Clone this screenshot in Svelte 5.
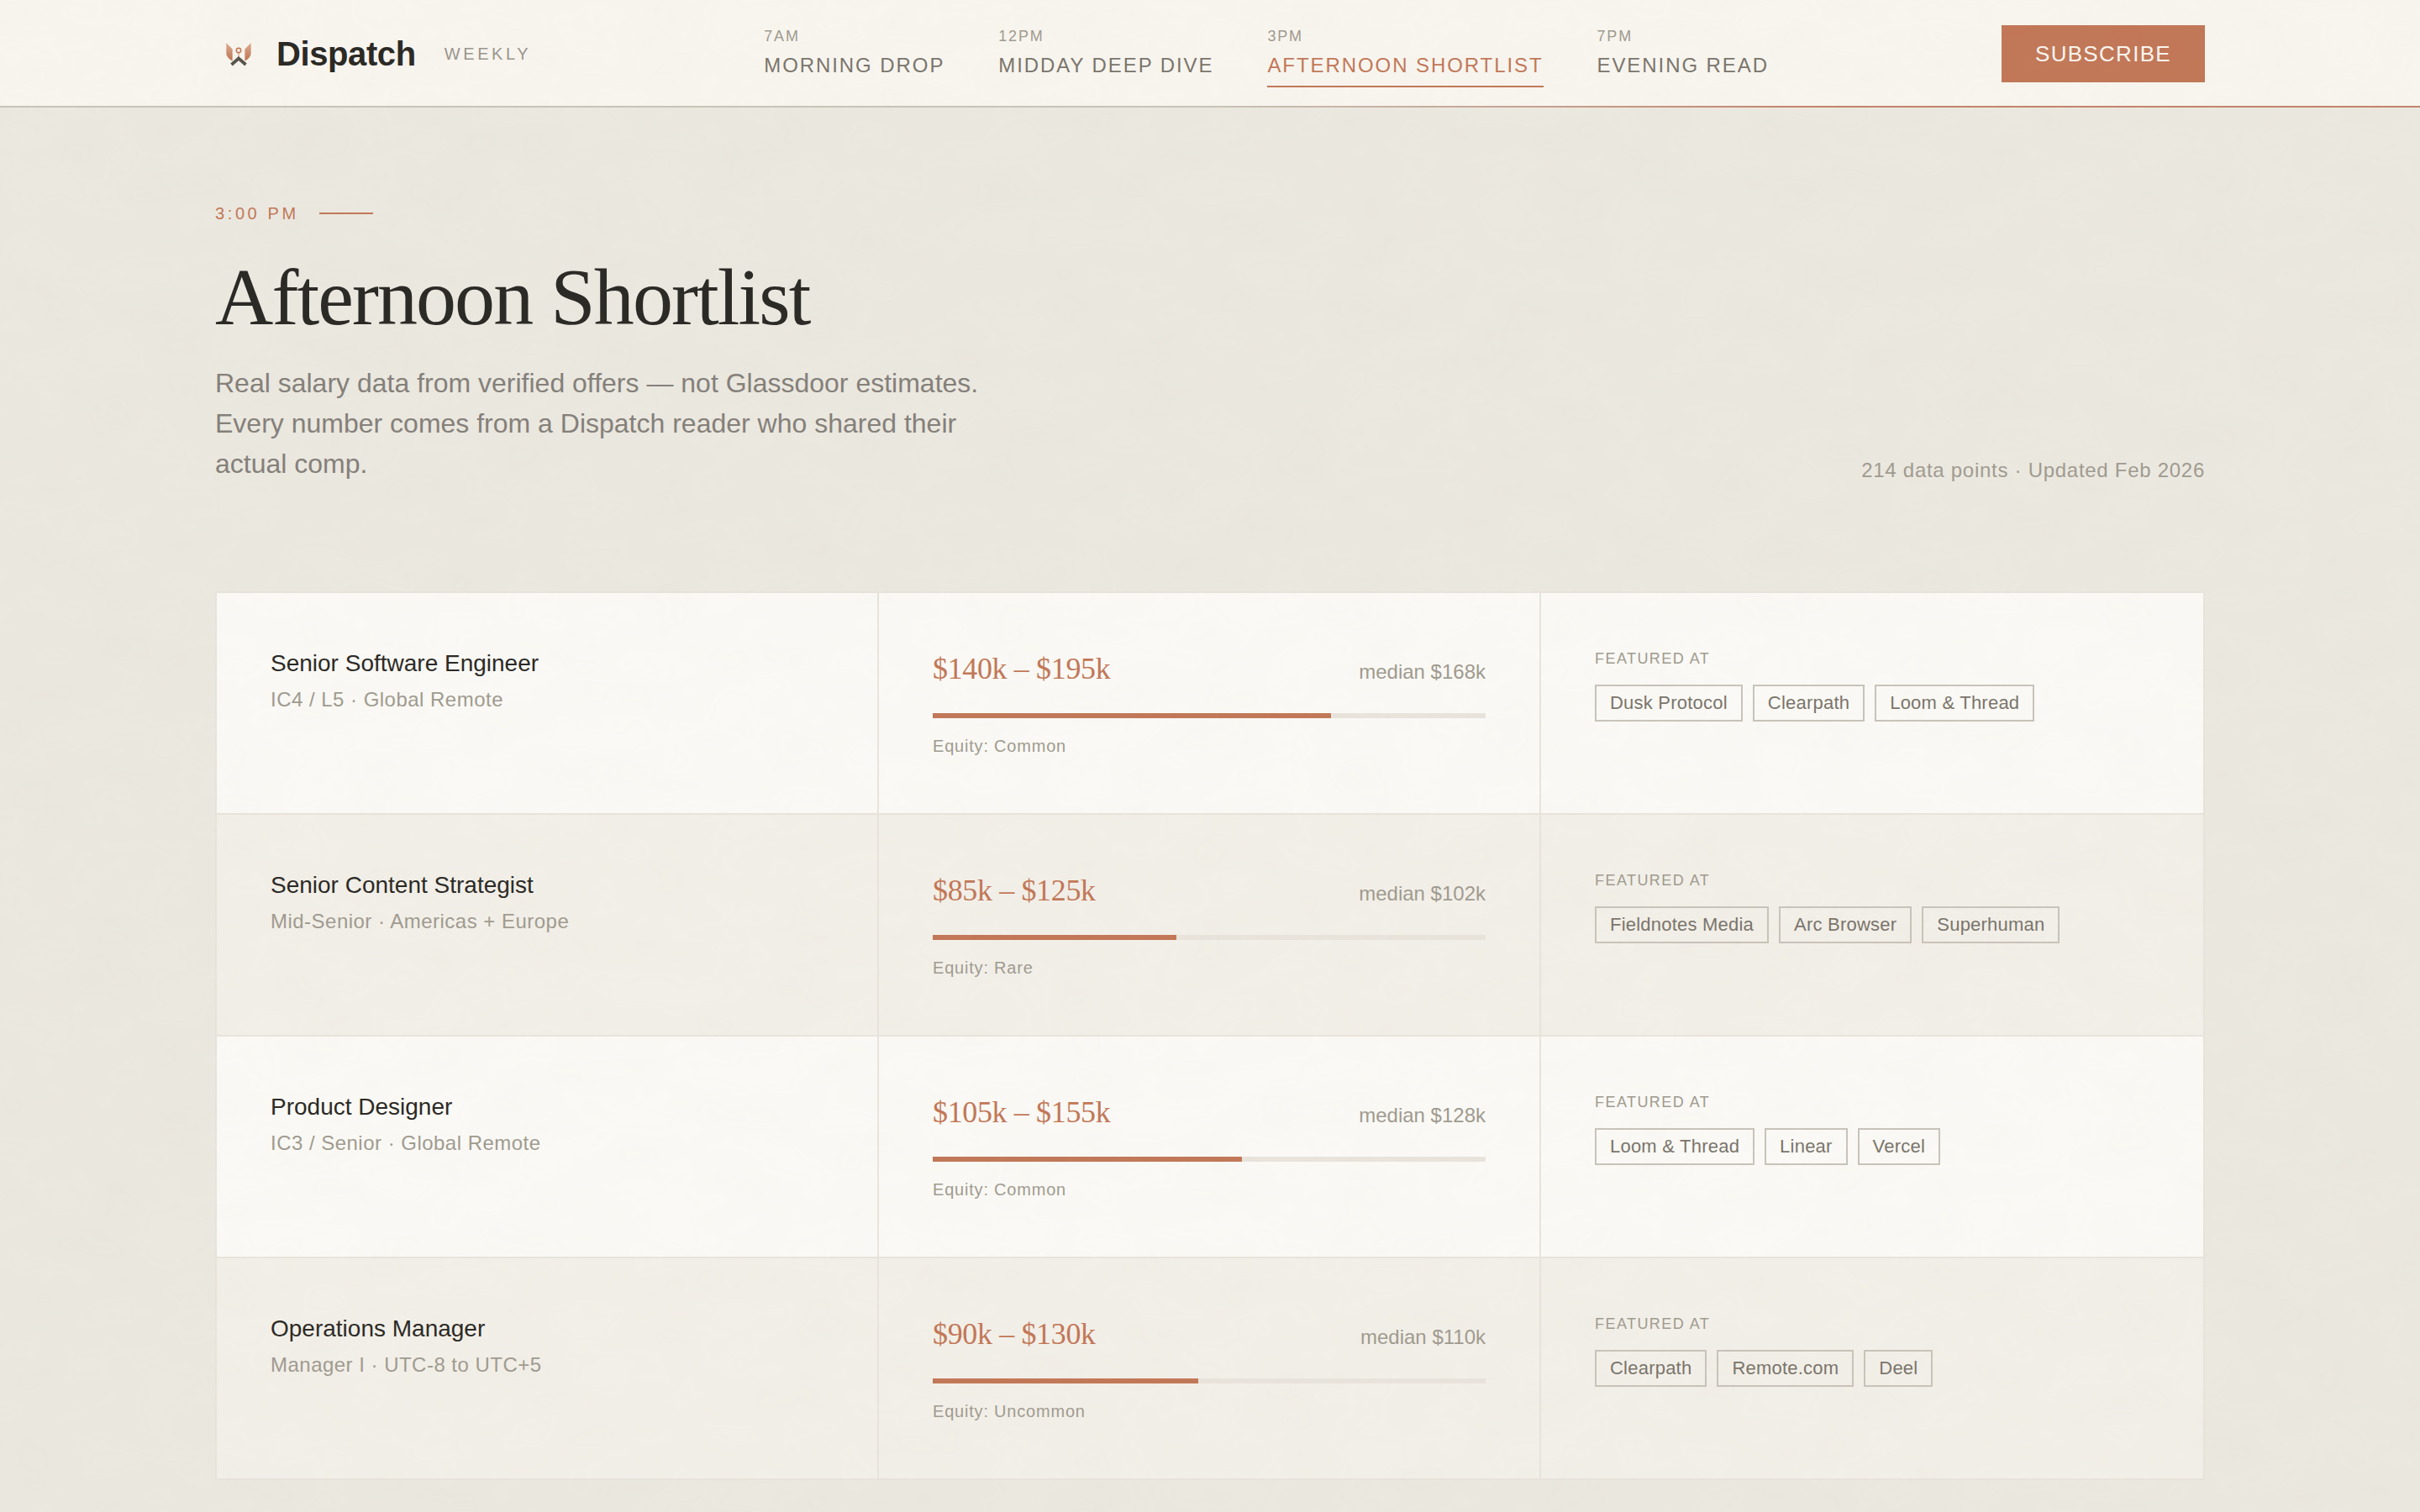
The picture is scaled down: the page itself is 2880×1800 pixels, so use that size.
<script>
  // Schedule shown in the top nav
  const slots = [
    { time: '7AM', name: 'Morning Drop' },
    { time: '12PM', name: 'Midday Deep Dive' },
    { time: '3PM', name: 'Afternoon Shortlist', active: true },
    { time: '7PM', name: 'Evening Read' }
  ];

  const roles = [
    {
      title: 'Senior Software Engineer',
      level: 'IC4 / L5 · Global Remote',
      range: '$140k – $195k',
      median: '$168k',
      fill: 72,
      equity: 'Common',
      companies: ['Dusk Protocol', 'Clearpath', 'Loom & Thread']
    },
    {
      title: 'Senior Content Strategist',
      level: 'Mid-Senior · Americas + Europe',
      range: '$85k – $125k',
      median: '$102k',
      fill: 44,
      equity: 'Rare',
      companies: ['Fieldnotes Media', 'Arc Browser', 'Superhuman']
    },
    {
      title: 'Product Designer',
      level: 'IC3 / Senior · Global Remote',
      range: '$105k – $155k',
      median: '$128k',
      fill: 56,
      equity: 'Common',
      companies: ['Loom & Thread', 'Linear', 'Vercel']
    },
    {
      title: 'Operations Manager',
      level: 'Manager I · UTC-8 to UTC+5',
      range: '$90k – $130k',
      median: '$110k',
      fill: 48,
      equity: 'Uncommon',
      companies: ['Clearpath', 'Remote.com', 'Deel']
    }
  ];
</script>

<header class="topbar">
  <div class="brand">
    <svg class="mark" viewBox="0 0 56 56" width="56" height="56" aria-hidden="true">
      <defs>
        <linearGradient id="wing" x1="0" y1="0" x2="0" y2="1">
          <stop offset="0" stop-color="#dfab8e" />
          <stop offset="1" stop-color="#bd7552" />
        </linearGradient>
      </defs>
      <path d="M13.3 15 L20.6 22.5 L20.6 36.5 Q13.3 33 13.3 27 Z" fill="url(#wing)" />
      <path d="M42.7 15 L35.4 22.5 L35.4 36.5 Q42.7 33 42.7 27 Z" fill="url(#wing)" />
      <path d="M28 27 L28 33" stroke="#e3bfa8" stroke-width="2" />
      <path d="M19.5 41 L28 33.5 L36.5 41" fill="none" stroke="#57534d" stroke-width="3.8" />
      <circle cx="28" cy="24" r="2.7" fill="#f8efe7" stroke="#c27858" stroke-width="1.5" />
    </svg>
    <span class="wordmark">Dispatch</span>
    <span class="edition">WEEKLY</span>
  </div>

  <nav class="slots">
    {#each slots as slot}
      <a class="slot" class:active={slot.active} href="#{slot.time}">
        <span class="slot-time">{slot.time}</span>
        <span class="slot-name">{slot.name}</span>
      </a>
    {/each}
  </nav>

  <button class="subscribe">SUBSCRIBE</button>
</header>

<main class="page">
  <section class="hero">
    <div class="hero-text">
      <div class="eyebrow">
        <span>3:00 PM</span>
        <i class="eyebrow-line"></i>
      </div>
      <h1>Afternoon Shortlist</h1>
      <p class="lede">
        Real salary data from verified offers — not Glassdoor estimates. Every number comes from a
        Dispatch reader who shared their actual comp.
      </p>
    </div>
    <p class="meta">214 data points · Updated Feb 2026</p>
  </section>

  <section class="table">
    {#each roles as role, i}
      <div class="cell" class:alt={i % 2 === 1}>
        <div class="role-title">{role.title}</div>
        <div class="role-level">{role.level}</div>
      </div>

      <div class="cell" class:alt={i % 2 === 1}>
        <div class="pay">
          <span class="range">{role.range}</span>
          <span class="median">median {role.median}</span>
        </div>
        <div class="track">
          <div class="fill" style="width: {role.fill}%"></div>
        </div>
        <div class="equity">Equity: {role.equity}</div>
      </div>

      <div class="cell" class:alt={i % 2 === 1}>
        <div class="featured">FEATURED AT</div>
        <div class="tags">
          {#each role.companies as company}
            <span class="tag">{company}</span>
          {/each}
        </div>
      </div>
    {/each}
  </section>
</main>

<!-- paper grain over the whole page -->
<svg class="grain" aria-hidden="true">
  <filter id="grain-noise">
    <feTurbulence type="fractalNoise" baseFrequency="0.012 0.02" numOctaves="3" seed="4" />
    <feColorMatrix values="0 0 0 0 0.45  0 0 0 0 0.42  0 0 0 0 0.36  0.9 0 0 0 -0.2" />
  </filter>
  <rect width="100%" height="100%" filter="url(#grain-noise)" />
</svg>

<style>
  :global(body) {
    margin: 0;
    background-color: #ebe8e0;
    font-family: "Liberation Sans", Arial, sans-serif;
  }

  .grain {
    position: fixed;
    inset: 0;
    width: 100%;
    height: 100%;
    opacity: 0.035;
    pointer-events: none;
  }

  .topbar {
    position: relative;
    box-sizing: border-box;
    height: 128px;
    padding: 0 256px;
    display: flex;
    align-items: center;
    justify-content: space-between;
    background-color: #f8f5ef;
  }

  .topbar::after {
    content: "";
    position: absolute;
    left: 0;
    right: 0;
    bottom: 0;
    height: 2px;
    background: linear-gradient(90deg, #c8c4ba 0, #c8c4ba 50%, #c4846a 75%, #c4846a 100%);
  }

  .brand {
    display: flex;
    align-items: center;
  }

  .mark {
    display: block;
    margin-right: 17px;
  }

  .wordmark {
    font-size: 40px;
    font-weight: 700;
    letter-spacing: -0.01em;
    color: #2c2a26;
    margin-right: 34px;
  }

  .edition {
    font-size: 20px;
    letter-spacing: 0.18em;
    color: #9a958c;
  }

  .slots {
    display: flex;
    gap: 64px;
  }

  .slot {
    display: flex;
    flex-direction: column;
    padding: 7px 0 9px;
    border-bottom: 2px solid transparent;
    text-decoration: none;
    color: #7a756c;
  }

  .slot.active {
    color: #c27858;
    border-bottom-color: #c27858;
  }

  .slot-time {
    font-size: 18px;
    line-height: 24px;
    letter-spacing: 0.1em;
    margin-bottom: 8px;
    color: #a09b90;
  }

  .slot-name {
    font-size: 24px;
    line-height: 30px;
    letter-spacing: 0.08em;
    text-transform: uppercase;
  }

  .subscribe {
    width: 242px;
    height: 68px;
    padding: 0;
    border: none;
    background-color: #c27858;
    color: #faf6f0;
    font-family: inherit;
    font-size: 26px;
    letter-spacing: 0.05em;
  }

  .page {
    padding: 112px 256px 36px;
  }

  .hero {
    display: flex;
    align-items: flex-end;
    justify-content: space-between;
    margin-bottom: 128px;
  }

  .eyebrow {
    display: flex;
    align-items: center;
    gap: 24px;
    font-size: 20px;
    line-height: 28px;
    letter-spacing: 0.18em;
    color: #c27858;
  }

  .eyebrow-line {
    display: block;
    width: 64px;
    height: 2px;
    background-color: #c27858;
  }

  h1 {
    margin: 33px 0 25px;
    font-family: "Liberation Serif", "Times New Roman", serif;
    font-size: 96px;
    line-height: 106px;
    font-weight: 400;
    letter-spacing: -0.02em;
    color: #2c2a26;
  }

  .lede {
    margin: 0;
    width: 960px;
    font-size: 32px;
    line-height: 48px;
    color: #85807a;
  }

  .meta {
    margin: 0;
    font-size: 24px;
    line-height: 32px;
    letter-spacing: 0.03em;
    color: #a09b90;
  }

  .table {
    display: grid;
    grid-template-columns: 786px 786px 1fr;
    gap: 2px;
    border: 2px solid #e8e4dc;
    background-color: #e8e4dc;
  }

  .cell {
    box-sizing: border-box;
    height: 262px;
    padding: 64px;
    background-color: #faf9f5;
  }

  .cell.alt {
    background-color: #f2efe8;
  }

  .role-title {
    font-size: 28px;
    line-height: 40px;
    color: #2c2a26;
  }

  .role-level {
    margin-top: 5px;
    font-size: 24px;
    line-height: 36px;
    letter-spacing: 0.02em;
    color: #a09b90;
  }

  .pay {
    display: flex;
    align-items: baseline;
    justify-content: space-between;
    margin-top: 2px;
  }

  .range {
    font-family: "Liberation Serif", "Times New Roman", serif;
    font-size: 36px;
    line-height: 48px;
    letter-spacing: -0.01em;
    color: #c27858;
  }

  .median {
    font-size: 24px;
    color: #a09b90;
  }

  .track {
    height: 6px;
    margin-top: 29px;
    background-color: #e8e4dc;
  }

  .fill {
    height: 100%;
    background-color: #c27858;
  }

  .equity {
    margin-top: 19px;
    font-size: 20px;
    line-height: 28px;
    letter-spacing: 0.04em;
    color: #a09b90;
  }

  .featured {
    font-size: 18px;
    line-height: 28px;
    letter-spacing: 0.08em;
    color: #a09b90;
  }

  .tags {
    display: flex;
    gap: 12px;
    margin-top: 17px;
  }

  .tag {
    box-sizing: border-box;
    height: 44px;
    padding: 0 16px;
    border: 2px solid #c8c4ba;
    font-size: 22px;
    line-height: 40px;
    letter-spacing: 0.01em;
    color: #7a756c;
  }
</style>
